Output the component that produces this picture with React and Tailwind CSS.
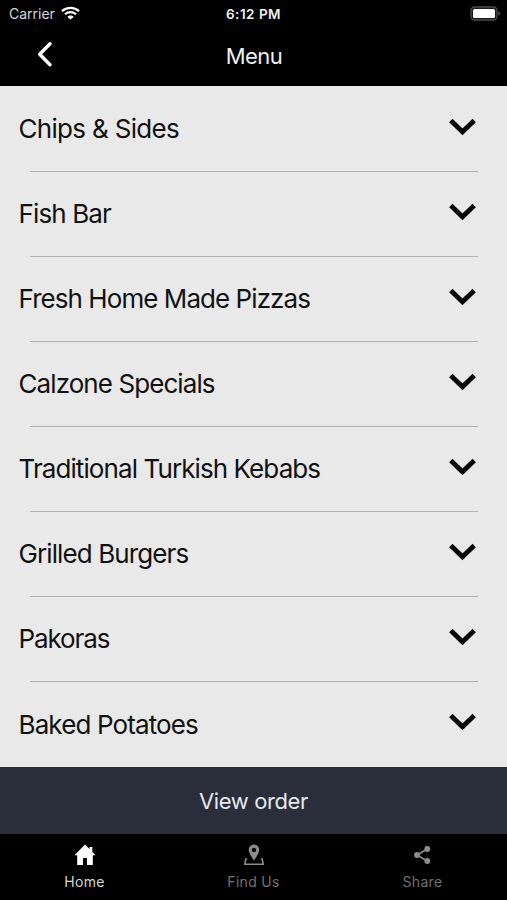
import React from "react";

const items = [
  { name: "Chips & Sides", tracking: "tracking-[-0.68px]" },
  { name: "Fish Bar", tracking: "tracking-[-0.88px]" },
  { name: "Fresh Home Made Pizzas", tracking: "tracking-[-0.94px]" },
  { name: "Calzone Specials", tracking: "tracking-[-0.92px]" },
  { name: "Traditional Turkish Kebabs", tracking: "tracking-[-0.91px]" },
  { name: "Grilled Burgers", tracking: "tracking-[-0.9px]" },
  { name: "Pakoras", tracking: "tracking-[-1.1px]" },
  { name: "Baked Potatoes", tracking: "tracking-[-0.88px]" },
];

function StatusBar() {
  return (
    <div className="grid h-7 grid-cols-3 items-center">
      <div className="flex items-center gap-[6px] pl-[9px]">
        <span className="text-[14px] leading-5 text-[#d8d8d8]">Carrier</span>
        <svg className="-mt-0.5 h-[14px] w-[19px]" viewBox="0 0 19 14" fill="none" stroke="#fff">
          <path d="M1 5.2C5.8.8 13.2.8 18 5.2" strokeWidth="2.4" />
          <path d="M4 8.3c3.1-2.8 7.9-2.8 11 0" strokeWidth="2.2" />
          <path d="M9.5 13 6.8 10.800c1.500-1.200 3.900-1.200 5.400 0z" fill="#fff" />
        </svg>
      </div>
      <div className="text-center text-[13.5px] font-semibold leading-5 tracking-[0.5px] text-[#f0f0f0]">6:12 PM</div>
      <div className="-mt-[2px] flex justify-end pr-[5px]">
        <svg className="h-[15px] w-[32px]" viewBox="0 0 32 15">
          <rect x="1" y="1" width="26" height="13" rx="3.5" fill="#1a1a1a" stroke="#4a4a4a" strokeWidth="1.3" />
          <rect x="3" y="3" width="22" height="9" rx="1.5" fill="#fff" />
          <path d="M28.5 5.5c2 .7 2 3.3 0 4z" fill="#666" />
        </svg>
      </div>
    </div>
  );
}

function TitleBar() {
  return (
    <div className="grid h-14 grid-cols-3 items-center">
      <svg className="-mt-1 ml-9 h-7 w-[18px]" viewBox="0 0 18 28" fill="none" stroke="#fff" strokeWidth="3.4" strokeLinecap="round" strokeLinejoin="round">
        <path d="M14 3.800 3.700 14.300 14 24.800" />
      </svg>
      <h1 className="pl-px text-center text-[22px] leading-7 tracking-[-0.5px] text-[#f0f0f0]">Menu</h1>
    </div>
  );
}

function MenuRow({ item, last }) {
  return (
    <li className="flex flex-col">
      <button className="flex flex-1 items-center justify-between pl-[18.5px] pr-[31px] text-left">
        <span className={"whitespace-nowrap text-[26px] leading-8 text-[#111] " + item.tracking}>{item.name}</span>
        <svg className="-mt-[5px] h-[18px] w-[27px]" viewBox="0 0 27 18" fill="none" stroke="#080808" strokeWidth="4.8">
          <path d="M1.8 2.5 13.5 13.8 25.2 2.5" />
        </svg>
      </button>
      {!last && <div className="ml-[30px] mr-[29px] h-px bg-[#b0b0b0]" />}
    </li>
  );
}

function Tab({ label, active, children }) {
  return (
    <button className={"flex flex-col items-center pt-[9px] " + (active ? "text-white" : "text-[#8c8c8c]")}>
      <svg className="h-6 w-6" viewBox="0 0 24 24" fill="none" stroke="currentColor">
        {children}
      </svg>
      <span className={"mt-[6px] text-[14px] leading-[18px] tracking-[0.3px] " + (active ? "text-[#d6d6d6]" : "text-[#707070]")}>{label}</span>
    </button>
  );
}

export default function App() {
  return (
    <div className="flex h-[900px] w-[507px] flex-col overflow-hidden bg-black font-['Inter',sans-serif]">
      <header className="h-[86px] bg-black">
        <StatusBar />
        <TitleBar />
      </header>
      <ul className="grid h-[681px] grid-rows-[repeat(8,85.07px)] overflow-hidden bg-[#e9e9e9] pt-px">
        {items.map((item, i) => (
          <MenuRow key={item.name} item={item} last={i === items.length - 1} />
        ))}
      </ul>
      <button className="flex h-[67px] items-center justify-center bg-[#292e3a] text-[22px] leading-7 tracking-[-0.4px] text-[#e4eaf0]">View order</button>
      <nav className="grid h-[66px] grid-cols-3">
        <Tab label="Home" active>
          <path d="M12 1.500 1.500 12.200h2.700v9.800h5.800v-7h4v7h5.800v-9.800h2.700L19.300 8.800V4h-2.800v2z" fill="currentColor" stroke="none" />
        </Tab>
        <Tab label="Find Us">
          <path d="M12 1.500a5.300 5.300 0 0 0-5.300 5.300c0 3.800 5.300 10.600 5.300 10.600s5.300-6.800 5.300-10.600A5.300 5.300 0 0 0 12 1.500zm0 3.200a2.200 2.200 0 1 1 0 4.400 2.200 2.200 0 0 1 0-4.400z" fill="currentColor" stroke="none" fillRule="evenodd" />
          <path d="M5.200 16H3.800L2.800 21.300h18.400L20.200 16h-1.400" strokeWidth="1.600" />
        </Tab>
        <Tab label="Share">
          <path d="M16.300 6 6 12 16.300 18" strokeWidth="1.600" />
          <circle cx="16.300" cy="6" r="2.900" fill="currentColor" stroke="none" />
          <circle cx="6" cy="12" r="2.900" fill="currentColor" stroke="none" />
          <circle cx="16.300" cy="18" r="2.900" fill="currentColor" stroke="none" />
        </Tab>
      </nav>
    </div>
  );
}
